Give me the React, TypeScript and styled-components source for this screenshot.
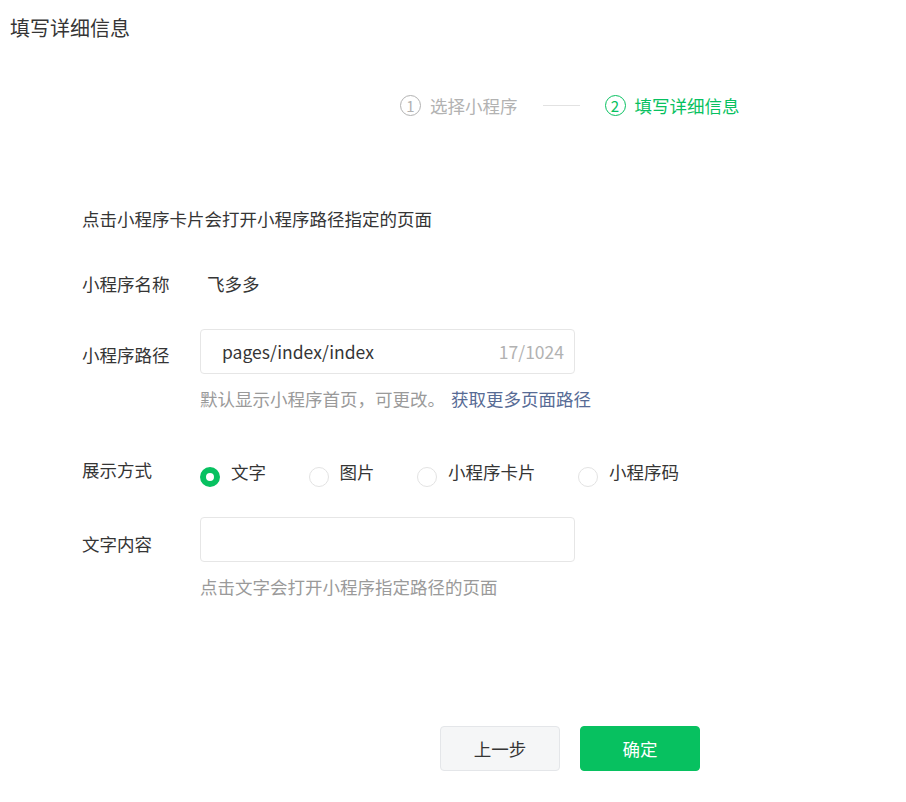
import React, { useState } from "react";
import styled, { createGlobalStyle } from "styled-components";

const GlobalStyle = createGlobalStyle`
  body {
    margin: 0;
    background: #ffffff;
    font-family: "Noto Sans CJK SC", "Noto Sans", sans-serif;
    color: #353535;
  }
`;

const Page = styled.div`
  width: 906px;
  height: 802px;
  overflow: hidden;
  display: flex;
  flex-direction: column;
`;

const Title = styled.div`
  margin: 14px 0 0 10px;
  font-size: 20px;
  line-height: 28px;
  color: #353535;
`;

const Steps = styled.div`
  display: flex;
  align-items: center;
  margin: 49px 0 0 400px;
  height: 28px;
`;

const Step = styled.div<{ $active?: boolean }>`
  display: flex;
  align-items: center;
  gap: 9px;
  font-size: 17.5px;
  color: ${(p) => (p.$active ? "#07c160" : "#b2b2b2")};
`;

const StepNum = styled.span`
  width: 19px;
  height: 19px;
  border: 1.3px solid currentColor;
  border-radius: 50%;
  display: flex;
  align-items: center;
  justify-content: center;
  font-size: 15px;
  line-height: 1;
`;

const StepLine = styled.div`
  width: 37px;
  height: 1px;
  background: #e2e2e2;
  margin: 0 25px;
`;

const Form = styled.div`
  display: flex;
  flex-direction: column;
  padding-left: 82px;
  margin-top: 86px;
`;

const Intro = styled.div`
  font-size: 17.5px;
  line-height: 28px;
  color: #353535;
`;

const Row = styled.div<{ $mt: number }>`
  display: flex;
  align-items: flex-start;
  margin-top: ${(p) => p.$mt}px;
`;

const Label = styled.div<{ $pt?: number }>`
  width: 118px;
  flex-shrink: 0;
  font-size: 17.5px;
  line-height: 28px;
  padding-top: ${(p) => p.$pt ?? 0}px;
  color: #353535;
`;

const Value = styled.div`
  font-size: 17.5px;
  line-height: 28px;
  margin-left: 7px;
  color: #353535;
`;

const Field = styled.div`
  display: flex;
  flex-direction: column;
`;

const InputBox = styled.div`
  width: 375px;
  height: 45px;
  box-sizing: border-box;
  border: 1px solid #e6e6e6;
  border-radius: 4px;
  display: flex;
  align-items: center;
  padding: 0 10px 0 21px;
`;

const Input = styled.input`
  flex: 1;
  min-width: 0;
  border: 0;
  outline: none;
  font-family: inherit;
  font-size: 17.5px;
  color: #353535;
  background: transparent;
  padding: 0;
`;

const Counter = styled.span`
  font-size: 17.5px;
  color: #b2b2b2;
`;

const Help = styled.div`
  margin-top: 11px;
  font-size: 17.5px;
  line-height: 28px;
  color: #9a9a9a;
`;

const Link = styled.a`
  color: #576b95;
  text-decoration: none;
  margin-left: 6px;
  cursor: pointer;
`;

const RadioGroup = styled.div`
  display: flex;
  align-items: flex-start;
  margin-top: 2px;
`;

const RadioItem = styled.label`
  display: flex;
  align-items: flex-start;
  margin-right: 42.5px;
  font-size: 17.5px;
  line-height: 28px;
  color: #353535;
  cursor: pointer;
`;

const RadioDot = styled.span<{ $checked: boolean }>`
  width: 20px;
  height: 20px;
  box-sizing: border-box;
  border-radius: 50%;
  margin: 9px 11px 0 0;
  border: ${(p) => (p.$checked ? "6.5px solid #07c160" : "1px solid #e3e3e3")};
  background: #ffffff;
`;

const Footer = styled.div`
  display: flex;
  gap: 20px;
  margin: 125px 0 0 440px;
`;

const Button = styled.button<{ $primary?: boolean }>`
  width: 120px;
  height: 45px;
  border-radius: 4px;
  font-family: inherit;
  font-size: 17.5px;
  cursor: pointer;
  border: 1px solid ${(p) => (p.$primary ? "#07c160" : "#e4e6e9")};
  background: ${(p) => (p.$primary ? "#07c160" : "#f5f6f7")};
  color: ${(p) => (p.$primary ? "#ffffff" : "#353535")};
`;

const options = ["文字", "图片", "小程序卡片", "小程序码"];

export default function App() {
  const [path, setPath] = useState("pages/index/index");
  const [mode, setMode] = useState("文字");
  const [text, setText] = useState("");

  return (
    <Page>
      <GlobalStyle />
      <Title>填写详细信息</Title>
      <Steps>
        <Step>
          <StepNum>1</StepNum>
          选择小程序
        </Step>
        <StepLine />
        <Step $active>
          <StepNum>2</StepNum>
          填写详细信息
        </Step>
      </Steps>
      <Form>
        <Intro>点击小程序卡片会打开小程序路径指定的页面</Intro>
        <Row $mt={37}>
          <Label>小程序名称</Label>
          <Value>飞多多</Value>
        </Row>
        <Row $mt={31}>
          <Label $pt={12}>小程序路径</Label>
          <Field>
            <InputBox>
              <Input value={path} onChange={(e) => setPath(e.target.value)} />
              <Counter>{path.length}/1024</Counter>
            </InputBox>
            <Help>
              默认显示小程序首页，可更改。
              <Link>获取更多页面路径</Link>
            </Help>
          </Field>
        </Row>
        <Row $mt={43}>
          <Label>展示方式</Label>
          <RadioGroup>
            {options.map((o) => (
              <RadioItem key={o} onClick={() => setMode(o)}>
                <RadioDot $checked={mode === o} />
                {o}
              </RadioItem>
            ))}
          </RadioGroup>
        </Row>
        <Row $mt={30}>
          <Label $pt={13}>文字内容</Label>
          <Field>
            <InputBox>
              <Input value={text} onChange={(e) => setText(e.target.value)} />
            </InputBox>
            <Help>点击文字会打开小程序指定路径的页面</Help>
          </Field>
        </Row>
      </Form>
      <Footer>
        <Button>上一步</Button>
        <Button $primary>确定</Button>
      </Footer>
    </Page>
  );
}
